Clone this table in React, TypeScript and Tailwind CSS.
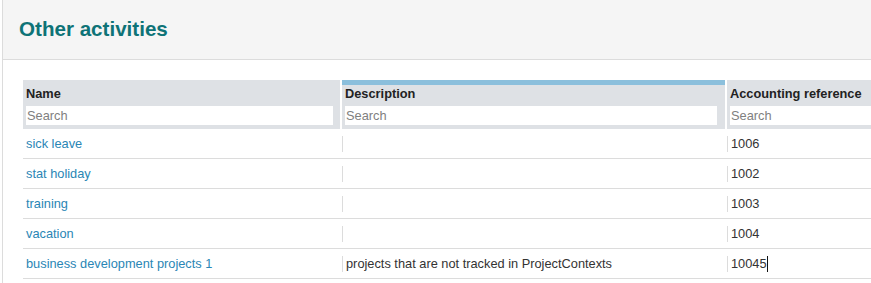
import React from 'react';

interface Activity {
    name: string;
    description: string;
    accountingRef: string;
}

const activities: Activity[] = [
    { name: 'sick leave', description: '', accountingRef: '1006' },
    { name: 'stat holiday', description: '', accountingRef: '1002' },
    { name: 'training', description: '', accountingRef: '1003' },
    { name: 'vacation', description: '', accountingRef: '1004' },
    { name: 'business development projects 1', description: 'projects that are not tracked in ProjectContexts', accountingRef: '10045' },
];

const HeaderCell = ({ label, width, active, inputWidth }: { label: string; width: string; active?: boolean; inputWidth: string }) => (
    <div className={`${width} shrink-0 bg-[#dee1e5] h-[49px] flex flex-col`}>
        <div className={`h-[5px] ${active ? 'bg-[#8bbfdc]' : ''}`} />
        <div className="pl-[3px] pt-[1px] text-[12.8px] font-bold leading-[15px] text-[#222]">{label}</div>
        <div className="pl-[3px] pt-[2px]">
            <input
                placeholder="Search"
                className={`${inputWidth} h-[19px] bg-white px-[1px] text-[12.8px] leading-[19px] text-[#333] placeholder:text-[#808080] outline-none`}
            />
        </div>
    </div>
);

export default function App() {
    return (
        <div className="w-[871px] h-[283px] overflow-hidden bg-white border-l border-[#dcdcdc] ml-[2px] font-['Liberation_Sans',Arial,sans-serif]">
            <header className="h-[60px] bg-[#f5f5f5] border-b border-[#dcdcdc] flex items-center pl-[16px] pb-[1px]">
                <h1 className="text-[20.6px] font-bold text-[#0e7377]">Other activities</h1>
            </header>

            <section className="pt-[20px] pl-[20px]">
                <div className="w-[900px]">
                    <div className="flex gap-[2px]">
                        <HeaderCell label="Name" width="w-[317px]" inputWidth="w-[307px]" />
                        <HeaderCell label="Description" width="w-[383px]" inputWidth="w-[372px]" active />
                        <HeaderCell label="Accounting reference" width="w-[196px]" inputWidth="w-[190px]" />
                    </div>

                    {activities.map((a, i) => (
                        <div key={i} className="flex h-[30px] items-center border-b border-[#dcdcdc] text-[12.8px]">
                            <div className="w-[319px] shrink-0 pl-[3px] text-[#2a86b5]">{a.name}</div>
                            <div className="w-[385px] shrink-0 flex items-center">
                                <span className="w-px h-[16px] bg-[#dcdcdc] mr-[3px]" />
                                <span className="text-[#333]">{a.description}</span>
                            </div>
                            <div className="flex items-center">
                                <span className="w-px h-[16px] bg-[#dcdcdc] mr-[3px]" />
                                <span className="text-[#333]">{a.accountingRef}</span>
                                {i === activities.length - 1 && <span className="w-px h-[16px] bg-[#111]" />}
                            </div>
                        </div>
                    ))}
                </div>
            </section>
        </div>
    );
}
